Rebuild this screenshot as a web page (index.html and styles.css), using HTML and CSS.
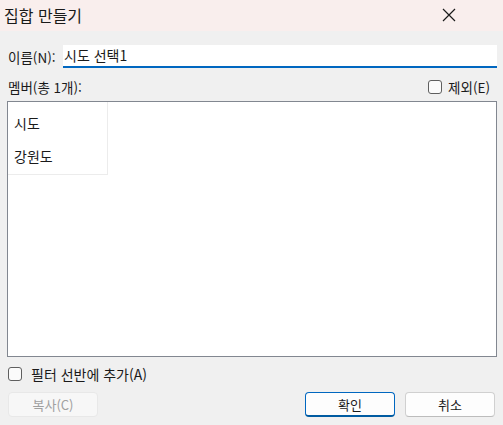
FILE: index.html
```html
<!DOCTYPE html>
<html lang="ko">
<head>
<meta charset="utf-8">
<link rel="stylesheet" href="styles.css">
</head>
<body>
<div class="dialog">
  <div class="titlebar">
    <span class="title">집합 만들기</span>
    <svg class="close" width="14" height="14" viewBox="0 0 14 14"><path d="M1 1 L13 13 M13 1 L1 13" stroke="#1a1a1a" stroke-width="1.2" fill="none"/></svg>
  </div>
  <div class="content">
    <div class="name-row">
      <span class="label">이름(N):</span>
      <div class="input">시도 선택1</div>
    </div>
    <div class="member-row">
      <span class="label">멤버(총 1개):</span>
      <label class="check"><span class="box"></span><span>제외(E)</span></label>
    </div>
    <div class="listbox">
      <div class="table">
        <div class="cell">시도</div>
        <div class="cell">강원도</div>
      </div>
    </div>
    <label class="check filter"><span class="box"></span><span>필터 선반에 추가(A)</span></label>
    <div class="buttons">
      <button class="btn disabled">복사(C)</button>
      <div class="spacer"></div>
      <button class="btn primary">확인</button>
      <button class="btn">취소</button>
    </div>
  </div>
</div>
</body>
</html>
```

FILE: styles.css
```css
* { box-sizing: border-box; }
html, body { margin: 0; padding: 0; }
body {
  width: 503px;
  height: 425px;
  background: #f0f0f0;
  font-family: "Noto Sans CJK KR", "Noto Sans", sans-serif;
  font-size: 13.5px;
  color: #1a1a1a;
  overflow: hidden;
}
.dialog { display: flex; flex-direction: column; height: 425px; }
.titlebar {
  height: 31px;
  background: #f9eeed;
  display: flex;
  align-items: center;
  justify-content: space-between;
  padding: 0 47px 0 4px;
}
.title { font-size: 16px; color: #1a1a1a; margin-top: -2px; }
.close { margin-top: -2px; }
.content { padding: 14px 6px 0 7px; display: flex; flex-direction: column; }
.name-row { display: flex; align-items: center; height: 23px; }
.name-row .label { width: 56px; padding-left: 1px; white-space: nowrap; }
.input {
  flex: 1;
  height: 23px;
  background: #fff;
  border-bottom: 2px solid #0067c0;
  padding: 1px 0 0 1px;
  font-size: 14px;
  line-height: 19px;
}
.member-row {
  display: flex;
  align-items: center;
  justify-content: space-between;
  height: 21px;
  margin-top: 8px;
  padding-left: 1px;
  padding-right: 7px;
}
.check { display: flex; align-items: center; gap: 6px; }
.box {
  width: 14px;
  height: 14px;
  border: 1px solid #5f5f5f;
  border-radius: 3px;
  background: #fbfbfb;
}
.listbox {
  margin-top: 4px;
  height: 256px;
  background: #fff;
  border: 1px solid #828790;
}
.table {
  width: 100px;
  border-right: 1px solid #ececec;
  border-bottom: 1px solid #ececec;
}
.cell { height: 36px; padding: 14px 0 0 6px; line-height: 15px; font-size: 14px; }
.cell + .cell { height: 36px; padding-top: 11px; }
.filter { margin-top: 10px; padding-left: 1px; gap: 9px; font-size: 14px; height: 14px; }
.buttons { display: flex; margin-top: 11px; gap: 10px; padding-left: 1px; padding-right: 2px; }
.spacer { flex: 1; }
.btn {
  width: 90px;
  height: 25px;
  font-family: inherit;
  font-size: 13px;
  color: #1a1a1a;
  background: #fdfdfd;
  border: 1px solid #d0d0d0;
  border-bottom-color: #bcbcbc;
  border-radius: 4px;
  padding: 0;
}
.btn.primary { border: 1px solid #0067c0; border-bottom: 2px solid #005ba1; }
.btn.disabled { background: #f7f7f7; border-color: #e8e8e8; color: #a0a0a0; }
```
